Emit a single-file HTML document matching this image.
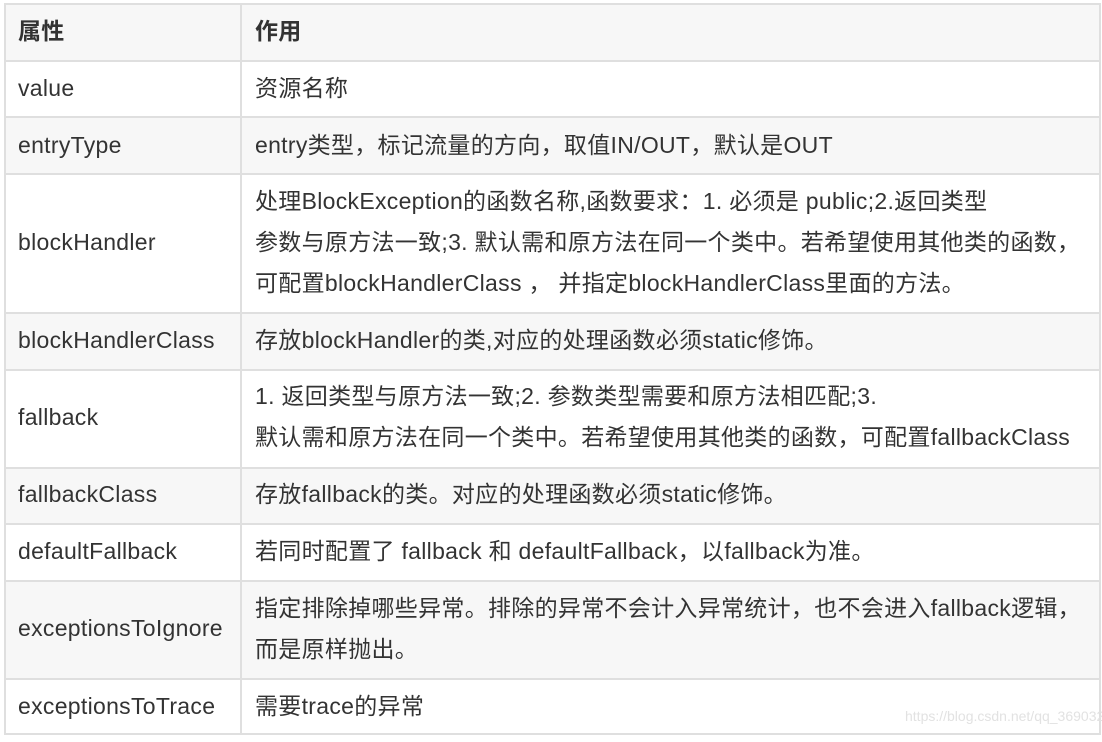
<!DOCTYPE html>
<html><head><meta charset="utf-8"><style>
body{margin:0;width:1102px;height:742px;background:#fff;position:relative;overflow:hidden;font-family:"Liberation Sans","Noto Sans CJK SC",sans-serif;color:#333;font-size:23px;letter-spacing:0.3px}
.r{position:absolute;left:4px;width:1096px;border-top:2px solid #dfdfdf;box-sizing:border-box}
.g{background:#f7f7f7}
.c1,.c2{position:absolute;white-space:nowrap;line-height:41px}
.c1{left:18px}
.c2{left:255px}
.v{position:absolute;top:3px;bottom:7px;width:2px;background:#dfdfdf}
</style></head><body>
<div class="r g" style="top:3px;height:57px"></div>
<div class="r" style="top:60px;height:56px"></div>
<div class="r g" style="top:116px;height:57px"></div>
<div class="r" style="top:173px;height:139px"></div>
<div class="r g" style="top:312px;height:57px"></div>
<div class="r" style="top:369px;height:98px"></div>
<div class="r g" style="top:467px;height:56px"></div>
<div class="r" style="top:523px;height:57px"></div>
<div class="r g" style="top:580px;height:98px"></div>
<div class="r" style="top:678px;height:57px;border-bottom:2px solid #dfdfdf"></div>
<div class="v" style="left:4px"></div>
<div class="v" style="left:240px"></div>
<div class="v" style="left:1099px"></div>

<div class="c1" style="top:11px;font-weight:bold">属性</div>
<div class="c2" style="top:11px;font-weight:bold">作用</div>
<div class="c1" style="top:68px">value</div>
<div class="c2" style="top:68px">资源名称</div>
<div class="c1" style="top:125px">entryType</div>
<div class="c2" style="top:125px">entry类型，标记流量的方向，取值IN/OUT，默认是OUT</div>
<div class="c1" style="top:222px">blockHandler</div>
<div class="c2" style="top:181px">处理BlockException的函数名称,函数要求：1. 必须是 public;2.返回类型<br>参数与原方法一致;3. 默认需和原方法在同一个类中。若希望使用其他类的函数，<br>可配置blockHandlerClass ， 并指定blockHandlerClass里面的方法。</div>
<div class="c1" style="top:320px">blockHandlerClass</div>
<div class="c2" style="top:320px">存放blockHandler的类,对应的处理函数必须static修饰。</div>
<div class="c1" style="top:397px">fallback</div>
<div class="c2" style="top:376px">1. 返回类型与原方法一致;2. 参数类型需要和原方法相匹配;3.<br>默认需和原方法在同一个类中。若希望使用其他类的函数，可配置fallbackClass</div>
<div class="c1" style="top:474px">fallbackClass</div>
<div class="c2" style="top:474px">存放fallback的类。对应的处理函数必须static修饰。</div>
<div class="c1" style="top:531px">defaultFallback</div>
<div class="c2" style="top:531px">若同时配置了 fallback 和 defaultFallback，以fallback为准。</div>
<div class="c1" style="top:608px">exceptionsToIgnore</div>
<div class="c2" style="top:588px">指定排除掉哪些异常。排除的异常不会计入异常统计，也不会进入fallback逻辑，<br>而是原样抛出。</div>
<div class="c1" style="top:686px">exceptionsToTrace</div>
<div class="c2" style="top:686px">需要trace的异常</div>
<div style="position:absolute;left:905px;top:708px;font-size:14px;letter-spacing:0;color:#e2e2e2;white-space:nowrap">https://blog.csdn.net/qq_3690326</div>
</body></html>
